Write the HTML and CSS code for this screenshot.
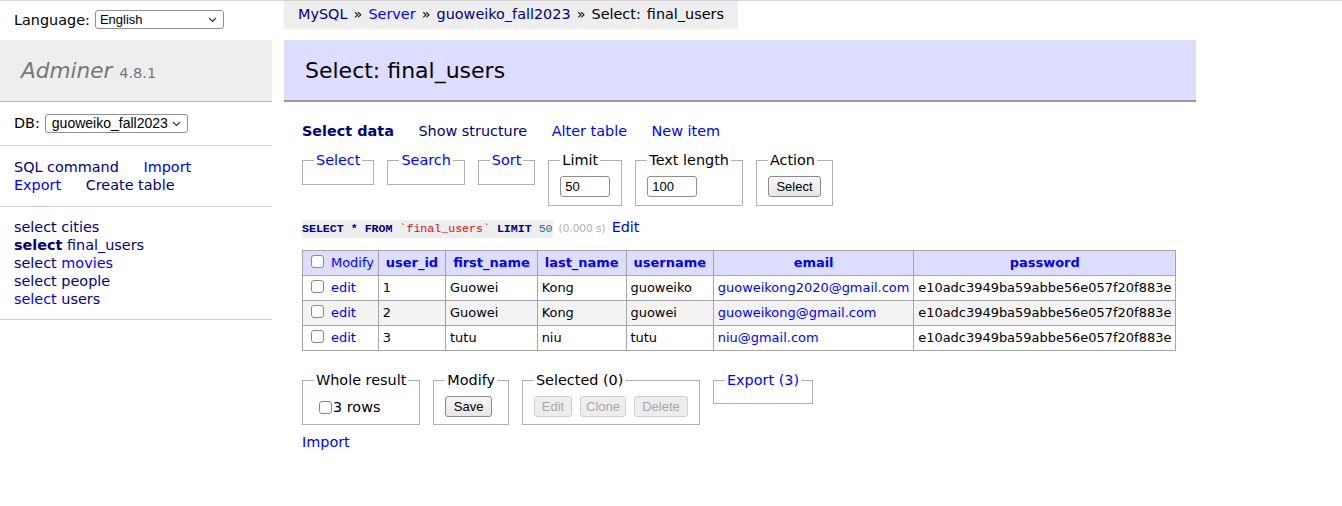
FILE: index.html
```html
<!DOCTYPE html>
<html lang="en">
<head>
<meta charset="utf-8">
<title>Select: final_users - Adminer</title>
<link rel="stylesheet" href="styles.css">
</head>
<body>
<div class="page">
  <aside class="sidebar">
    <div class="lang">Language: <span class="selwrap"><select class="sel sel-lang"><option>English</option></select><svg class="chev" width="9" height="6" viewBox="0 0 9 6"><path d="M1 1l3.5 3.5L8 1" fill="none" stroke="#333" stroke-width="1.1"/></svg></span></div>
    <h1 class="logo"><a class="logo-link" href="#">Adminer</a> <span class="version">4.8.1</span></h1>
    <p class="menu-block db">DB: <span class="selwrap"><select class="sel sel-db"><option>guoweiko_fall2023</option></select><svg class="chev" width="9" height="6" viewBox="0 0 9 6"><path d="M1 1l3.5 3.5L8 1" fill="none" stroke="#333" stroke-width="1.1"/></svg></span></p>
    <p class="menu-block links">
      <a class="v mr" href="#">SQL command</a> <a class="mr" href="#">Import</a><br>
      <a class="mr" href="#">Export</a> <a class="v mr" href="#">Create table</a>
    </p>
    <ul class="menu-block tables">
      <li><a class="v" href="#">select</a> <a class="v" href="#">cities</a></li>
      <li><a class="v active" href="#">select</a> <a class="v" href="#">final_users</a></li>
      <li><a class="v" href="#">select</a> <a href="#">movies</a></li>
      <li><a class="v" href="#">select</a> <a class="v" href="#">people</a></li>
      <li><a href="#">select</a> <a class="v" href="#">users</a></li>
    </ul>
  </aside>
  <main class="main">
    <div class="crumb-row"><div class="breadcrumb"><a class="v" href="#">MySQL</a> » <a href="#">Server</a> » <a class="v" href="#">guoweiko_fall2023</a> » Select: final_users</div></div>
    <h2 class="title">Select: final_users</h2>
    <div class="content">
      <p class="nav"><a class="v cur mr" href="#">Select data</a> <a class="v mr" href="#">Show structure</a> <a class="mr" href="#">Alter table</a> <a class="mr" href="#">New item</a></p>
      <div class="fsrow">
        <fieldset class="fs"><legend><a href="#">Select</a></legend></fieldset>
        <fieldset class="fs"><legend><a href="#">Search</a></legend></fieldset>
        <fieldset class="fs"><legend><a href="#">Sort</a></legend></fieldset>
        <fieldset class="fs"><legend>Limit</legend><div class="fsbody"><input class="txt w-limit" value="50"></div></fieldset>
        <fieldset class="fs"><legend>Text length</legend><div class="fsbody"><input class="txt w-len" value="100"></div></fieldset>
        <fieldset class="fs"><legend>Action</legend><div class="fsbody"><button class="btn">Select</button></div></fieldset>
      </div>
      <p class="sqlline"><code class="sql"><b class="kw">SELECT</b> <b class="kw">*</b> <b class="kw">FROM</b> <span class="bac">`final_users`</span> <b class="kw">LIMIT</b> <span class="num">50</span></code> <span class="time">(0.000 s)</span> <a href="#">Edit</a></p>
      <table class="data">
        <thead>
          <tr>
            <td class="chk-head"><input type="checkbox" class="cb"> <a href="#">Modify</a></td>
            <th><a href="#">user_id</a></th>
            <th><a href="#">first_name</a></th>
            <th><a href="#">last_name</a></th>
            <th><a href="#">username</a></th>
            <th><a href="#">email</a></th>
            <th><a href="#">password</a></th>
          </tr>
        </thead>
        <tbody>
          <tr>
            <td><input type="checkbox" class="cb"> <a href="#">edit</a></td>
            <td>1</td><td>Guowei</td><td>Kong</td><td>guoweiko</td>
            <td><a href="#">guoweikong2020@gmail.com</a></td>
            <td>e10adc3949ba59abbe56e057f20f883e</td>
          </tr>
          <tr class="odd">
            <td><input type="checkbox" class="cb"> <a href="#">edit</a></td>
            <td>2</td><td>Guowei</td><td>Kong</td><td>guowei</td>
            <td><a href="#">guoweikong@gmail.com</a></td>
            <td>e10adc3949ba59abbe56e057f20f883e</td>
          </tr>
          <tr>
            <td><input type="checkbox" class="cb"> <a href="#">edit</a></td>
            <td>3</td><td>tutu</td><td>niu</td><td>tutu</td>
            <td><a href="#">niu@gmail.com</a></td>
            <td>e10adc3949ba59abbe56e057f20f883e</td>
          </tr>
        </tbody>
      </table>
      <div class="fsrow bottom">
        <fieldset class="fs"><legend>Whole result</legend><div class="fsbody"><label class="rows"><input type="checkbox" class="cb cb-all">3 rows</label></div></fieldset>
        <fieldset class="fs"><legend>Modify</legend><div class="fsbody"><button class="btn">Save</button></div></fieldset>
        <fieldset class="fs"><legend>Selected (0)</legend><div class="fsbody btns"><button class="btn b-edit" disabled>Edit</button><button class="btn b-clone" disabled>Clone</button><button class="btn b-delete" disabled>Delete</button></div></fieldset>
        <fieldset class="fs export"><legend><a href="#">Export (3)</a></legend></fieldset>
      </div>
      <p class="import"><a href="#">Import</a></p>
    </div>
  </main>
</div>
</body>
</html>
```

FILE: styles.css
```css
html, body {
  margin: 0;
  padding: 0;
  background: #fff;
}
body {
  border-top: 1px solid #d4d4d4;
  color: #000;
  font-family: "DejaVu Sans", Verdana, sans-serif;
  font-size: 14.4px;
  line-height: 18px;
}
a { color: #0000ff; text-decoration: none; }
a.v { color: #000080; }

.page {
  display: flex;
  align-items: flex-start;
}

/* ---------- sidebar ---------- */
.sidebar {
  width: 272px;
  flex: none;
}
.lang {
  height: 37px;
  padding: 0 14px 2px;
  display: flex;
  align-items: center;
  gap: 5px;
}
.selwrap {
  position: relative;
  display: inline-flex;
}
.chev {
  position: absolute;
  right: 7px;
  top: 7px;
  pointer-events: none;
}
.sel {
  appearance: none;
  -webkit-appearance: none;
  font-family: "Liberation Sans", Arial, sans-serif;
  font-size: 13px;
  height: 19px;
  padding: 0 2px 0 4px;
  border: 1px solid #8f8f8f;
  border-radius: 3px;
  background: #fff;
  color: #000;
  box-sizing: border-box;
}
.sel-lang { width: 129px; }
.sel-db { width: 143px; font-size: 14px; padding-left: 6px; }

.logo {
  margin: 0;
  height: 27px;
  padding: 17px 21px 17px;
  background: #eee;
  border-bottom: 1px solid #b4b4b4;
  font-size: 21.6px;
  line-height: 27px;
  font-weight: normal;
  color: #777;
}
.logo-link { color: #777; font-style: italic; }
.version { font-size: 14.5px; color: #777; line-height: 1; }

.menu-block {
  margin: 0;
  padding: 11px 14px;
  border-bottom: 1px solid #ccc;
}
.db {
  display: flex;
  align-items: center;
  gap: 5px;
  height: 20px;
  padding-top: 11px;
  padding-bottom: 12px;
}
.links { padding-top: 12px; padding-bottom: 12px; }
.mr { margin-right: 20px; }
.tables {
  list-style: none;
  padding-top: 11px;
  padding-bottom: 11px;
}
.active { font-weight: bold; }

/* ---------- main ---------- */
.main {
  margin-left: 12px;
  flex: none;
}
.crumb-row { display: flex; }
.breadcrumb {
  background: #eee;
  height: 29px;
  line-height: 27px;
  padding: 0 14px;
  white-space: nowrap;
  margin-top: -1px;
  padding-top: 1px;
  box-sizing: border-box;
  word-spacing: 1.5px;
}
.title {
  margin: 11px 0 20px;
  padding: 17px 21px 16px;
  background: #ddf;
  border-bottom: 2px solid #9a9a9a;
  font-size: 22px;
  line-height: 27px;
  font-weight: normal;
  color: #000;
}
.content {
  padding: 0 20px 20px 18px;
}
.nav { margin: 0; }
.cur { font-weight: bold; }

.fsrow {
  display: flex;
  align-items: flex-start;
  gap: 13px;
  margin-top: 11px;
}
.fs {
  margin: 0;
  padding: 7px 11px 8px;
  border: 1px solid #b0b0b0;
  min-width: 0;
}
.fs legend {
  padding: 0 2px;
  line-height: 18px;
}
.fsbody {
  display: flex;
  align-items: center;
  gap: 8px;
  min-height: 21px;
}
.txt {
  font-family: "Liberation Sans", Arial, sans-serif;
  font-size: 13px;
  height: 21px;
  box-sizing: border-box;
  border: 1px solid #8f8f8f;
  border-radius: 3px;
  padding: 0 4px;
  margin: 0;
}
.w-limit { width: 50px; }
.w-len { width: 50px; }
.btn {
  font-family: "Liberation Sans", Arial, sans-serif;
  font-size: 13px;
  height: 21px;
  padding: 0 7.5px;
  margin: 0;
  border: 1px solid #8a8a8a;
  border-radius: 3px;
  background: linear-gradient(#f6f6f6, #e6e6e6);
  color: #000;
}
.btn:disabled {
  color: #a8a8a8;
  border-color: #d0d0d0;
  background: #ededed;
}
.b-edit { width: 38px; padding: 0; }
.b-clone { width: 46px; padding: 0; }
.b-delete { width: 54px; padding: 0; }

.sqlline {
  margin: 12px 0 0;
  display: flex;
  align-items: baseline;
  gap: 6px;
}
.sql {
  font-family: "Liberation Mono", "Courier New", monospace;
  font-size: 11.6px;
  background: #eee;
  color: #000;
  white-space: pre;
}
.kw { color: #000080; font-weight: bold; }
.bac { color: #d01010; }
.num { color: #008080; }
.time { color: #b0b0b0; font-size: 10.5px; }

.data {
  margin-top: 12px;
  border-collapse: collapse;
  font-size: 12.96px;
  line-height: 16px;
}
.data td, .data th {
  border: 1px solid #a6a6a6;
  padding: 2.5px 3.9px;
  white-space: nowrap;
  text-align: left;
  height: 19px;
}
.data thead th, .data thead td { background: #ddf; }
.data thead th { text-align: center; padding: 2.5px 7px; font-weight: bold; }
.data tr.odd td { background: #f3f3f3; }
.cb {
  appearance: none;
  -webkit-appearance: none;
  width: 13px;
  height: 13px;
  border: 1px solid #8a8a8a;
  border-radius: 3px;
  background: #fff;
  margin: 0 3px 0 4px;
  vertical-align: -2px;
  box-sizing: border-box;
}
.data td .cb { vertical-align: -1px; }

.rows { display: flex; align-items: center; gap: 0; }
.cb-all { margin: 2px 1px 0 5px; }

.fsrow.bottom { margin-top: 20px; }
.fsrow.bottom .fs { padding-bottom: 7px; }
.export .fsbody { display: none; }
.import { margin: 8px 0 0; }
```
